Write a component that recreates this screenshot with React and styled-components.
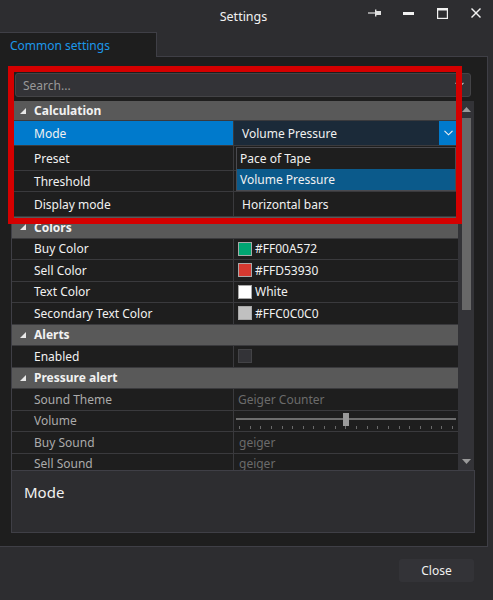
import React from 'react';
import styled, { createGlobalStyle } from 'styled-components';

const GlobalStyle = createGlobalStyle`
  html, body { margin: 0; padding: 0; background: #2d2d30; }
  body {
    font-family: "Segoe UI", "Noto Sans", "Open Sans", sans-serif;
    font-size: 12px;
    color: #f1f1f1;
  }
  * { box-sizing: border-box; }
`;

const Window = styled.div`
  position: relative;
  width: 493px;
  height: 600px;
  display: flex;
  flex-direction: column;
  background: #2d2d30;
  overflow: hidden;
`;

const TitleBar = styled.div`
  height: 32px;
  flex: none;
  display: grid;
  grid-template-columns: 1fr auto 1fr;
  align-items: center;
`;

const Title = styled.div`
  grid-column: 2;
  font-size: 12.5px;
  color: #f1f1f1;
  margin-right: 6px;
`;

const WindowButtons = styled.div`
  grid-column: 3;
  justify-self: end;
  display: flex;
  height: 32px;
`;

const WinButton = styled.div`
  width: 34px;
  height: 32px;
  display: flex;
  align-items: center;
  justify-content: center;
  margin-top: -3px;
`;

const TabStrip = styled.div`
  height: 25px;
  flex: none;
  display: flex;
`;

const Tab = styled.div`
  width: 157px;
  border-top: 1px solid #3f3f46;
  border-right: 1px solid #3f3f46;
  background: #1e1e1e;
  color: #1c97ea;
  padding-left: 10px;
  display: flex;
  align-items: center;
  font-size: 12px;
`;

const TabRest = styled.div`
  width: 331px;
  border-bottom: 1px solid #3f3f46;
`;

const Panel = styled.div`
  width: 488px;
  height: 490px;
  flex: none;
  background: #1e1e1e;
  border-right: 1px solid #3f3f46;
  border-bottom: 1px solid #3f3f46;
  padding: 16px 12px 13px 11px;
  display: flex;
  flex-direction: column;
`;

const SearchBox = styled.div`
  height: 24px;
  margin: 0 4px 4px 4px;
  background: #333337;
  border: 1px solid #434346;
  border-radius: 3px;
  display: flex;
  align-items: center;
  padding: 0 6px 0 7px;
  color: #999999;
  flex: none;
`;

const SearchText = styled.span`
  flex: 1;
`;

const Grid = styled.div`
  height: 369px;
  flex: none;
  margin-right: 1px;
  display: flex;
  border-left: 1px solid #3f3f46;
  overflow: hidden;
`;

const Rows = styled.div`
  position: relative;
  flex: 1;
  display: flex;
  flex-direction: column;
`;

const CategoryRow = styled.div`
  height: ${p => p.$h}px;
  flex: none;
  background: #595959;
  border-bottom: 1px solid #3a3a3d;
  display: flex;
  align-items: center;
  padding-left: 8px;
  font-weight: bold;
  color: #f1f1f1;
`;

const Expander = styled.svg`
  width: 6px;
  height: 6px;
  margin-right: 8px;
`;

const PropRow = styled.div`
  height: ${p => p.$h}px;
  flex: none;
  display: flex;
  border-bottom: 1px solid #3a3a3d;
`;

const NameCell = styled.div`
  width: 222px;
  flex: none;
  padding-left: 22px;
  display: flex;
  align-items: center;
  border-right: 1px solid #3a3a3d;
  background: ${p => (p.$selected ? '#007acc' : '#1e1e1e')};
  color: ${p => (p.$dim ? '#ababab' : '#f1f1f1')};
  white-space: nowrap;
`;

const ValueCell = styled.div`
  flex: 1;
  display: flex;
  align-items: center;
  padding-left: ${p => p.$pad}px;
  color: ${p => (p.$dim ? '#6b6b6b' : '#f1f1f1')};
  white-space: nowrap;
  overflow: hidden;
`;

const ComboValue = styled.div`
  flex: 1;
  height: 100%;
  display: flex;
  align-items: center;
  padding-left: 8px;
  background: #1b2a39;
`;

const ComboButton = styled.div`
  width: 18px;
  height: 100%;
  margin-right: 1px;
  background: #007acc;
  display: flex;
  align-items: center;
  justify-content: center;
`;

const Swatch = styled.span`
  width: 14px;
  height: 14px;
  flex: none;
  background: ${p => p.$color};
  border: 1px solid #a8a8a8;
  margin-right: 3px;
`;

const CheckBox = styled.span`
  width: 14px;
  height: 14px;
  background: #333337;
  border: 1px solid #434346;
`;

const SliderCell = styled.div`
  flex: 1;
  display: flex;
  flex-direction: column;
  padding: 2px 2px 0 2px;
`;

const SliderTrack = styled.div`
  position: relative;
  height: 13px;
  display: flex;
  align-items: center;
`;

const SliderLine = styled.div`
  flex: 1;
  height: 2px;
  background: #6e6e6e;
`;

const SliderThumb = styled.div`
  position: absolute;
  left: 50%;
  top: 0;
  width: 6px;
  height: 13px;
  margin-left: -3px;
  background: #9a9a9a;
`;

const Ticks = styled.div`
  display: flex;
  justify-content: space-between;
  padding: 0 3px;
  height: 3px;
`;

const Tick = styled.span`
  width: 1px;
  height: 3px;
  background: #6a6a6a;
`;

const Popup = styled.div`
  position: absolute;
  left: 224px;
  top: 46px;
  width: 220px;
  height: 44px;
  background: #1e1e1e;
  border: 1px solid #4a4a4f;
  display: flex;
  flex-direction: column;
`;

const PopupItem = styled.div`
  height: 21px;
  display: flex;
  align-items: center;
  padding-left: 3px;
  background: ${p => (p.$selected ? '#0b5a8b' : 'transparent')};
  color: #f1f1f1;
`;

const ScrollBar = styled.div`
  width: 16px;
  flex: none;
  background: #333337;
  display: flex;
  flex-direction: column;
  align-items: center;
`;

const ScrollArrow = styled.div`
  height: 17px;
  flex: none;
  display: flex;
  align-items: center;
  justify-content: center;
`;

const ScrollThumb = styled.div`
  width: 9px;
  height: 192px;
  background: #686868;
  flex: none;
`;

const ScrollSpace = styled.div`
  flex: 1;
`;

const Description = styled.div`
  height: 63px;
  flex: none;
  background: #2d2d30;
  border: 1px solid #3f3f46;
  padding: 10px 12px 0 12px;
  font-size: 15px;
  line-height: 22px;
  color: #f1f1f1;
`;

const Footer = styled.div`
  flex: 1;
  display: flex;
  justify-content: flex-end;
  align-items: flex-start;
  padding: 12px 19px 0 0;
`;

const CloseButton = styled.div`
  width: 75px;
  height: 23px;
  background: #333337;
  border-radius: 3px;
  display: flex;
  align-items: center;
  justify-content: center;
  color: #f1f1f1;
  font-size: 12px;
`;

const Highlight = styled.div`
  position: absolute;
  left: 8px;
  top: 66px;
  width: 454px;
  height: 158px;
  border: 6px solid #d40000;
  pointer-events: none;
`;

const Chevron = ({ color = '#f1f1f1' }) => (
  <svg width="9" height="6" viewBox="0 0 9 6">
    <polyline points="0.5,0.8 4.5,4.8 8.5,0.8" fill="none" stroke={color} strokeWidth="1.1" />
  </svg>
);

const Triangle = ({ up }) => (
  <svg width="9" height="5" viewBox="0 0 9 5">
    <polygon points={up ? '0,5 4.5,0 9,5' : '0,0 9,0 4.5,5'} fill="#9a9a9a" />
  </svg>
);

const Category = ({ h, label }) => (
  <CategoryRow $h={h}>
    <Expander viewBox="0 0 6 6">
      <polygon points="6,0 6,6 0,6" fill="#e8e8e8" />
    </Expander>
    {label}
  </CategoryRow>
);

const H = 21.5;
const ticks = Array.from({ length: 21 });

export default function App() {
  return (
    <>
      <GlobalStyle />
      <Window>
        <TitleBar>
          <Title>Settings</Title>
          <WindowButtons>
            <WinButton>
              <svg width="13" height="8" viewBox="0 0 13 8">
                <line x1="0" y1="4" x2="7" y2="4" stroke="#e0e0e0" strokeWidth="1.2" />
                <rect x="7" y="0.5" width="1.4" height="7" fill="#e0e0e0" />
                <rect x="8" y="2" width="5" height="4" fill="#e0e0e0" />
              </svg>
            </WinButton>
            <WinButton>
              <svg width="11" height="3" viewBox="0 0 11 3">
                <rect x="0" y="0" width="11" height="3" fill="#f1f1f1" />
              </svg>
            </WinButton>
            <WinButton>
              <svg width="11" height="11" viewBox="0 0 11 11">
                <rect x="0.6" y="0.6" width="9.8" height="9.8" fill="none" stroke="#f1f1f1" strokeWidth="1.2" />
                <rect x="0" y="0" width="11" height="2.5" fill="#f1f1f1" />
              </svg>
            </WinButton>
            <WinButton>
              <svg width="10" height="10" viewBox="0 0 10 10">
                <line x1="0.5" y1="0.5" x2="9.5" y2="9.5" stroke="#f1f1f1" strokeWidth="1.4" />
                <line x1="9.5" y1="0.5" x2="0.5" y2="9.5" stroke="#f1f1f1" strokeWidth="1.4" />
              </svg>
            </WinButton>
          </WindowButtons>
        </TitleBar>

        <TabStrip>
          <Tab>Common settings</Tab>
          <TabRest />
        </TabStrip>

        <Panel>
          <SearchBox>
            <SearchText>Search...</SearchText>
            <Chevron color="#c8c8c8" />
          </SearchBox>

          <Grid>
            <Rows>
              <Category h={20} label="Calculation" />
              <PropRow $h={25}>
                <NameCell $selected>Mode</NameCell>
                <ValueCell $pad={0}>
                  <ComboValue>Volume Pressure</ComboValue>
                  <ComboButton>
                    <Chevron />
                  </ComboButton>
                </ValueCell>
              </PropRow>
              <PropRow $h={25}>
                <NameCell>Preset</NameCell>
                <ValueCell $pad={8} />
              </PropRow>
              <PropRow $h={21}>
                <NameCell>Threshold</NameCell>
                <ValueCell $pad={8} />
              </PropRow>
              <PropRow $h={25}>
                <NameCell>Display mode</NameCell>
                <ValueCell $pad={8}>Horizontal bars</ValueCell>
              </PropRow>

              <Category h={H} label="Colors" />
              <PropRow $h={H}>
                <NameCell>Buy Color</NameCell>
                <ValueCell $pad={4}><Swatch $color="#00a572" />#FF00A572</ValueCell>
              </PropRow>
              <PropRow $h={H}>
                <NameCell>Sell Color</NameCell>
                <ValueCell $pad={4}><Swatch $color="#d53930" />#FFD53930</ValueCell>
              </PropRow>
              <PropRow $h={H}>
                <NameCell>Text Color</NameCell>
                <ValueCell $pad={4}><Swatch $color="#ffffff" />White</ValueCell>
              </PropRow>
              <PropRow $h={H}>
                <NameCell>Secondary Text Color</NameCell>
                <ValueCell $pad={4}><Swatch $color="#c0c0c0" />#FFC0C0C0</ValueCell>
              </PropRow>

              <Category h={H} label="Alerts" />
              <PropRow $h={H}>
                <NameCell>Enabled</NameCell>
                <ValueCell $pad={4}><CheckBox /></ValueCell>
              </PropRow>

              <Category h={H} label="Pressure alert" />
              <PropRow $h={H}>
                <NameCell $dim>Sound Theme</NameCell>
                <ValueCell $pad={4} $dim>Geiger Counter</ValueCell>
              </PropRow>
              <PropRow $h={H}>
                <NameCell $dim>Volume</NameCell>
                <SliderCell>
                  <SliderTrack>
                    <SliderLine />
                    <SliderThumb />
                  </SliderTrack>
                  <Ticks>
                    {ticks.map((_, i) => <Tick key={i} />)}
                  </Ticks>
                </SliderCell>
              </PropRow>
              <PropRow $h={H}>
                <NameCell $dim>Buy Sound</NameCell>
                <ValueCell $pad={5} $dim>geiger</ValueCell>
              </PropRow>
              <PropRow $h={H}>
                <NameCell $dim>Sell Sound</NameCell>
                <ValueCell $pad={5} $dim>geiger</ValueCell>
              </PropRow>

              <Popup>
                <PopupItem>Pace of Tape</PopupItem>
                <PopupItem $selected>Volume Pressure</PopupItem>
              </Popup>
            </Rows>
            <ScrollBar>
              <ScrollArrow><Triangle up /></ScrollArrow>
              <ScrollThumb />
              <ScrollSpace />
              <ScrollArrow><Triangle /></ScrollArrow>
            </ScrollBar>
          </Grid>

          <Description>Mode</Description>
        </Panel>

        <Footer>
          <CloseButton>Close</CloseButton>
        </Footer>

        <Highlight />
      </Window>
    </>
  );
}
